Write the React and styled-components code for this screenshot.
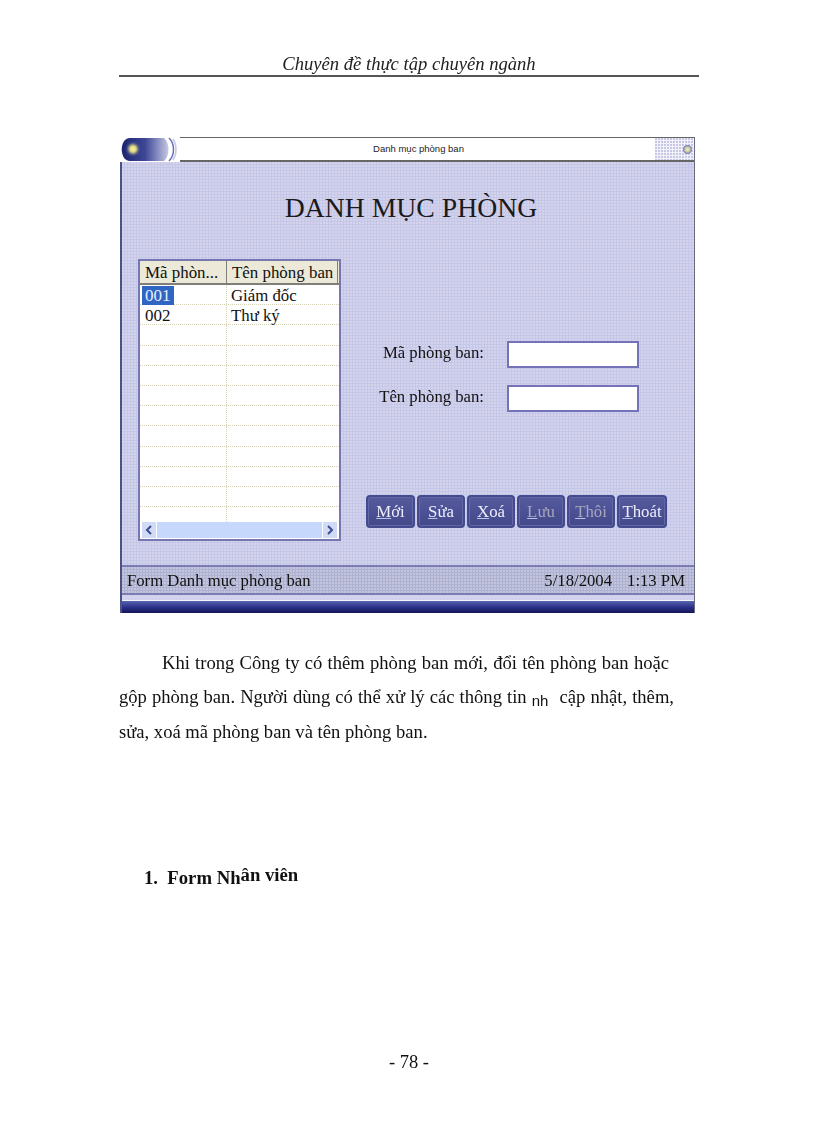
import React from "react";
import styled, { createGlobalStyle } from "styled-components";

const rows = [
  ["001", "Giám đốc"],
  ["002", "Thư ký"],
  ["", ""],
  ["", ""],
  ["", ""],
  ["", ""],
  ["", ""],
  ["", ""],
  ["", ""],
  ["", ""],
  ["", ""],
  ["", ""],
];

const buttons = [
  { first: "M", rest: "ới", width: 49 },
  { first: "S", rest: "ửa", width: 48 },
  { first: "X", rest: "oá", width: 48 },
  { first: "L", rest: "ưu", width: 48, off: true },
  { first: "T", rest: "hôi", width: 48, off: true },
  { first: "T", rest: "hoát", width: 50 },
];

const App = () => {
  return (
    <PAGE>
      <GlobalStyle />
      <HEADER>Chuyên đề thực tập chuyên ngành</HEADER>
      <WINDOW>
        <TITLEBAR>
          <svg width="60" height="25" viewBox="0 0 60 25">
            <defs>
              <linearGradient id="cap" x1="0" x2="1" y1="0" y2="0">
                <stop offset="0" stopColor="#1d2570" />
                <stop offset="0.5" stopColor="#3e4796" />
                <stop offset="1" stopColor="#c6c8e4" />
              </linearGradient>
              <radialGradient id="orb">
                <stop offset="0" stopColor="#fbf6a0" />
                <stop offset="0.4" stopColor="#d8d480" />
                <stop offset="1" stopColor="#3a4290" stopOpacity="0" />
              </radialGradient>
            </defs>
            <rect width="60" height="25" fill="#ffffff" />
            <path d="M10 1H44C50 6 50 19 44 24H10C-1 24 -1 1 10 1Z" fill="url(#cap)" />
            <circle cx="13" cy="12" r="8" fill="url(#orb)" />
            <path d="M49 1C55 7 55 18 49 24" fill="none" stroke="#6a70b4" strokeWidth="1.5" />
            <path d="M53 2C57 8 57 17 53 23" fill="none" stroke="#c4c8e8" strokeWidth="1.5" />
          </svg>
          <CAPTION>Danh mục phòng ban</CAPTION>
          <DITHEREND>
            <CLOSEDOT />
          </DITHEREND>
        </TITLEBAR>
        <BODY>
          <FORMTITLE>DANH MỤC PHÒNG</FORMTITLE>
          <CONTENT>
            <TABLEPANEL>
              <TABLEHEAD>
                <HEADCELL $w={87}>Mã phòn...</HEADCELL>
                <HEADCELL $w={111}>Tên phòng ban</HEADCELL>
              </TABLEHEAD>
              {rows.map((r, i) => (
                <TABLEROW key={i}>
                  <CELL $w={87}>{r[0] && <CELLTEXT $selected={i === 0}>{r[0]}</CELLTEXT>}</CELL>
                  <CELL $w={111} $last>
                    {r[1] && <NAMETEXT>{r[1]}</NAMETEXT>}
                  </CELL>
                </TABLEROW>
              ))}
              <SCROLLBAR>
                <SCROLLBTN>
                  <svg width="8" height="10" viewBox="0 0 8 10">
                    <path d="M6 1L2 5L6 9" fill="none" stroke="#3c4a90" strokeWidth="2" />
                  </svg>
                </SCROLLBTN>
                <SCROLLTRACK />
                <SCROLLBTN>
                  <svg width="8" height="10" viewBox="0 0 8 10">
                    <path d="M2 1L6 5L2 9" fill="none" stroke="#3c4a90" strokeWidth="2" />
                  </svg>
                </SCROLLBTN>
              </SCROLLBAR>
            </TABLEPANEL>
            <RIGHTSIDE>
              <FIELDS>
                <FIELDLABEL>Mã phòng ban:</FIELDLABEL>
                <FIELDBOX />
                <FIELDLABEL>Tên phòng ban:</FIELDLABEL>
                <FIELDBOX />
              </FIELDS>
              <BUTTONROW>
                {buttons.map((b) => (
                  <FORMBUTTON key={b.first + b.rest} $w={b.width} $off={b.off}>
                    <u>{b.first}</u>
                    {b.rest}
                  </FORMBUTTON>
                ))}
              </BUTTONROW>
            </RIGHTSIDE>
          </CONTENT>
        </BODY>
        <STATUSBAR>
          <span>Form Danh mục phòng ban</span>
          <STATUSRIGHT>
            <span>5/18/2004</span>
            <span>1:13 PM</span>
          </STATUSRIGHT>
        </STATUSBAR>
        <LIGHTSTRIP />
        <DARKSTRIP />
      </WINDOW>
      <PARAGRAPH>
        <FIRSTLINE>Khi trong Công ty có thêm phòng ban mới, đổi tên phòng ban hoặc</FIRSTLINE>
        <LINE>
          gộp phòng ban. Người dùng có thể xử lý các thông tin <ODD>nh</ODD> cập nhật, thêm,
        </LINE>
        <LASTLINE>sửa, xoá mã phòng ban và tên phòng ban.</LASTLINE>
      </PARAGRAPH>
      <SECTION>
        1.&nbsp; Form Nh<RAISED>ân viên</RAISED>
      </SECTION>
      <PAGENUMBER>- 78 -</PAGENUMBER>
    </PAGE>
  );
};

export default App;

const GlobalStyle = createGlobalStyle`
  html, body {
    margin: 0;
    padding: 0;
    background: #ffffff;
  }
`;

const PAGE = styled.div`
  width: 816px;
  height: 1123px;
  box-sizing: border-box;
  padding: 51px 117px 0 119px;
  font-family: "Liberation Serif", serif;
  color: #111;
  overflow: hidden;
  filter: blur(0.3px);
`;

const HEADER = styled.div`
  height: 24px;
  line-height: 25px;
  text-align: center;
  font-size: 18.6px;
  font-style: italic;
  border-bottom: 2px solid #555;
  color: #222;
`;

const WINDOW = styled.div`
  width: 575px;
  margin: 60px 0 0 1px;
  box-sizing: border-box;
  border-left: 2px solid #4a5288;
  border-right: 1px solid #6a6a80;
  display: flex;
  flex-direction: column;
`;

const TITLEBAR = styled.div`
  height: 25px;
  display: flex;
  background: #fff;
  border-top: 1px solid #666;
  border-bottom: 2px solid #666;
  box-sizing: border-box;
  svg {
    flex: none;
    margin-left: -2px;
    margin-top: -1px;
  }
`;

const CAPTION = styled.div`
  flex: 1;
  font-family: "Liberation Sans", sans-serif;
  font-size: 9.5px;
  line-height: 22px;
  color: #222;
  text-align: center;
  padding-left: 2px;
  margin: 0 0 2px 0;
  background: #fff;
`;

const DITHEREND = styled.div`
  width: 39px;
  display: flex;
  justify-content: flex-end;
  align-items: center;
  padding-right: 2px;
  box-sizing: border-box;
  background: radial-gradient(circle at 1px 1px, #c8c8e4 1px, transparent 1px) 0 0 / 3px 3px, #f2f2fa;
`;

const CLOSEDOT = styled.div`
  width: 9px;
  height: 9px;
  border-radius: 50%;
  background: radial-gradient(circle, #e6e2a8 0 25%, #7e84b8 65%);
`;

const BODY = styled.div`
  height: 403px;
  box-sizing: border-box;
  padding: 30px 0 0 16px;
  background: radial-gradient(circle at 1px 1px, #d6d2ec 1px, transparent 1px) 0 0 / 3px 3px, #c3c7e8;
`;

const FORMTITLE = styled.div`
  height: 32px;
  line-height: 32px;
  font-size: 27.7px;
  text-align: center;
  color: #1a1a1a;
  margin-right: 10px;
`;

const CONTENT = styled.div`
  display: flex;
  margin-top: 35px;
`;

const TABLEPANEL = styled.div`
  width: 203px;
  height: 282px;
  box-sizing: border-box;
  border: 2px solid #7676b0;
  background: #fff;
`;

const TABLEHEAD = styled.div`
  display: flex;
  height: 24px;
  box-sizing: border-box;
  background: #ece9d8;
  border-bottom: 2px solid #807e78;
`;

const HEADCELL = styled.div`
  width: ${(p) => p.$w}px;
  box-sizing: border-box;
  font-size: 16.9px;
  line-height: 23px;
  padding-left: 5px;
  white-space: nowrap;
  overflow: hidden;
  border-right: 1px solid #807e78;
`;

const TABLEROW = styled.div`
  display: flex;
  height: 20.2px;
  box-sizing: border-box;
  border-bottom: 1px dotted #d6d2b4;
  &:nth-of-type(13) {
    height: 15px;
    border-bottom: none;
  }
`;

const CELL = styled.div`
  width: ${(p) => p.$w}px;
  box-sizing: border-box;
  font-size: 16.8px;
  line-height: 21px;
  border-right: ${(p) => (p.$last ? "none" : "1px dotted #d6d2b4")};
`;

const CELLTEXT = styled.span`
  display: inline-block;
  margin-left: 2px;
  padding: 0 3px;
  height: 19px;
  line-height: 20px;
  font-size: 17px;
  background: ${(p) => (p.$selected ? "#2f66c4" : "transparent")};
  color: ${(p) => (p.$selected ? "#e8eefc" : "#111")};
`;

const NAMETEXT = styled.span`
  padding-left: 4px;
`;

const SCROLLBAR = styled.div`
  display: flex;
  height: 16px;
  gap: 1px;
  padding: 0 2px;
`;

const SCROLLBTN = styled.div`
  width: 14px;
  display: flex;
  align-items: center;
  justify-content: center;
  background: #d0dcf6;
`;

const SCROLLTRACK = styled.div`
  flex: 1;
  background: #c6d8fc;
`;

const RIGHTSIDE = styled.div`
  margin-left: 25px;
  display: flex;
  flex-direction: column;
`;

const FIELDS = styled.div`
  display: grid;
  grid-template-columns: 118px 132px;
  column-gap: 23px;
  row-gap: 17px;
  margin-top: 82px;
`;

const FIELDLABEL = styled.div`
  font-size: 16.7px;
  line-height: 24px;
  text-align: right;
  white-space: nowrap;
`;

const FIELDBOX = styled.div`
  height: 27px;
  box-sizing: border-box;
  border: 2px solid #7472b8;
  background: #fff;
`;

const BUTTONROW = styled.div`
  display: flex;
  gap: 2px;
  margin-top: 83px;
`;

const FORMBUTTON = styled.div`
  width: ${(p) => p.$w}px;
  height: 33px;
  box-sizing: border-box;
  border: 2px solid #444a8e;
  border-radius: 4px;
  background: linear-gradient(180deg, #565b9c 0%, #4e5398 40%, #434888 100%);
  box-shadow: inset 0 0 0 1px #6367a6;
  color: ${(p) => (p.$off ? "#a6a6bc" : "#eceefa")};
  font-size: 16.8px;
  line-height: 29px;
  text-align: center;
  white-space: nowrap;
  u {
    text-decoration-color: #b8c4ea;
  }
`;

const STATUSBAR = styled.div`
  height: 30px;
  box-sizing: border-box;
  border-top: 2px solid #7c7cb4;
  border-bottom: 2px solid #7c7cb4;
  padding: 2px 9px 0 5px;
  display: flex;
  justify-content: space-between;
  align-items: center;
  font-size: 16.7px;
  background: radial-gradient(circle at 1px 1px, #c4c4dc 1px, transparent 1px) 0 0 / 3px 3px, #adb2d2;
`;

const STATUSRIGHT = styled.div`
  display: flex;
  gap: 15px;
`;

const LIGHTSTRIP = styled.div`
  height: 5px;
  background: #d2d2ec;
  border-bottom: 1px solid #f4f4fc;
`;

const DARKSTRIP = styled.div`
  height: 12px;
  background: linear-gradient(180deg, #5a64b0 0%, #2c3288 50%, #15155c 100%);
`;

const PARAGRAPH = styled.div`
  margin-top: 33px;
  font-size: 18.6px;
  line-height: 34px;
`;

const LINE = styled.div`
  display: block;
  white-space: nowrap;
  width: 555px;
  text-align: justify;
  text-align-last: justify;
`;

const FIRSTLINE = styled(LINE)`
  width: 507px;
  margin-left: 43px;
`;

const LASTLINE = styled(LINE)`
  width: auto;
  text-align-last: left;
`;

const ODD = styled.span`
  font-family: "Liberation Sans", sans-serif;
  font-size: 15px;
  position: relative;
  top: 3px;
  margin: 0 6px 0 0;
`;

const SECTION = styled.div`
  margin: 117px 0 0 25px;
  height: 24px;
  line-height: 24px;
  font-size: 18.7px;
  font-weight: bold;
`;

const RAISED = styled.span`
  position: relative;
  top: -3px;
`;

const PAGENUMBER = styled.div`
  margin-top: 162px;
  height: 20px;
  line-height: 20px;
  font-size: 18.5px;
  text-align: center;
`;
